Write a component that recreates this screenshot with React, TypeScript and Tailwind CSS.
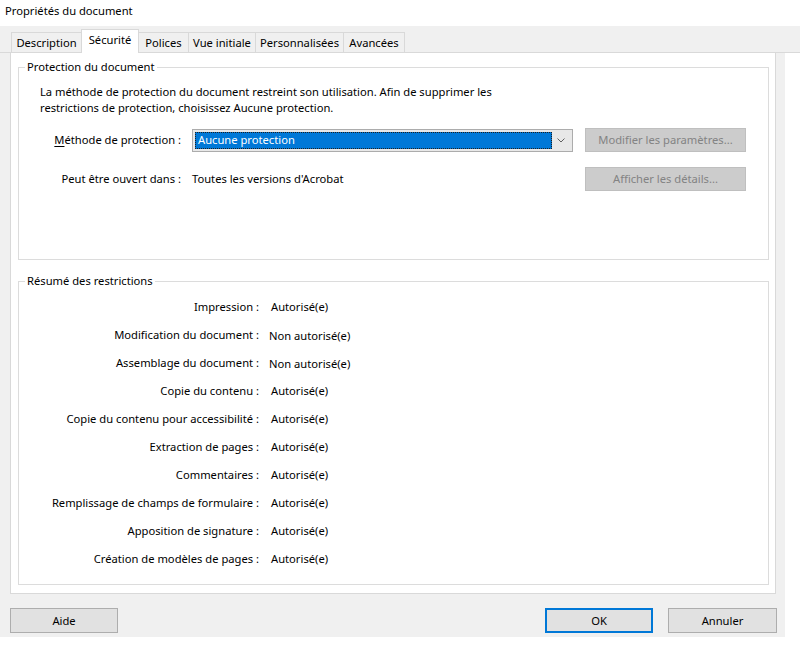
import React from "react";

const TABS = [
  { label: "Description", w: "w-[71px]" },
  { label: "Sécurité", w: "w-[58px]", active: true },
  { label: "Polices", w: "w-[51px]" },
  { label: "Vue initiale", w: "w-[68px]" },
  { label: "Personnalisées", w: "w-[89px]" },
  { label: "Avancées", w: "w-[62px]" },
];

const RESTRICTIONS: { label: string; value: string; denied?: boolean }[] = [
  { label: "Impression :", value: "Autorisé(e)" },
  { label: "Modification du document :", value: "Non autorisé(e)", denied: true },
  { label: "Assemblage du document :", value: "Non autorisé(e)", denied: true },
  { label: "Copie du contenu :", value: "Autorisé(e)" },
  { label: "Copie du contenu pour accessibilité :", value: "Autorisé(e)" },
  { label: "Extraction de pages :", value: "Autorisé(e)" },
  { label: "Commentaires :", value: "Autorisé(e)" },
  { label: "Remplissage de champs de formulaire :", value: "Autorisé(e)" },
  { label: "Apposition de signature :", value: "Autorisé(e)" },
  { label: "Création de modèles de pages :", value: "Autorisé(e)" },
];

function DisabledButton({ children }: { children: React.ReactNode }) {
  return (
    <div className="w-[161px] h-[24px] flex items-center justify-center bg-[#cccccc] border border-[#bfbfbf] text-[#838383]">
      {children}
    </div>
  );
}

export default function App() {
  return (
    <div className="w-[800px] h-[648px] bg-white text-[11.2px] leading-[16px] text-black font-['Noto_Sans',sans-serif] overflow-hidden">
      {/* Title */}
      <div className="h-[26px] pl-[5px] pt-[3px]">Propriétés du document</div>

      {/* Tab strip */}
      <div className="h-[27px] bg-[#f0f0f0] border-b border-[#d9d9d9] flex items-end pl-[11px]">
        {TABS.map((t) =>
          t.active ? (
            <div key={t.label} className={`${t.w} h-[24px] -mb-px -ml-px relative z-10 bg-white border border-b-0 border-[#d9d9d9] flex items-start justify-center pt-[2px]`}>
              {t.label}
            </div>
          ) : (
            <div key={t.label} className={`${t.w} h-[20px] -ml-px first:ml-0 bg-[#f0f0f0] border border-b-0 border-[#d9d9d9] flex items-center justify-center`}>
              {t.label}
            </div>
          )
        )}
      </div>

      {/* Dialog body */}
      <div className="w-[785px] h-[584px] bg-[#f0f0f0] pl-[10px] pr-[8px] flex flex-col">
        <div className="w-[766px] h-[541px] bg-white border-l border-r border-b border-[#d9d9d9] pt-[6px] pl-[7px] pr-[6px]">
          {/* Protection du document */}
          <fieldset className="h-[201px] border border-[#dcdcdc]">
            <legend className="ml-[6px] px-[2px] leading-[16px]">Protection du document</legend>
            <p className="mt-[9px] ml-[21px] w-[470px]">
              La méthode de protection du document restreint son utilisation. Afin de supprimer les restrictions de protection, choisissez Aucune protection.
            </p>
            <div className="mt-[12px] flex items-center h-[24px]">
              <div className="w-[162px] text-right">
                <span className="underline underline-offset-2">M</span>éthode de protection :
              </div>
              <div className="ml-[11px] w-[381px] h-[23px] border border-[#acacac] bg-[#e8e8e8] flex items-center p-[2px]">
                <div className="flex-1 h-full bg-[#0078d7] border border-dotted border-[#202020] text-white pl-[2px] flex items-center">
                  Aucune protection
                </div>
                <div className="w-[18px] flex items-center justify-center">
                  <svg width="8" height="5" viewBox="0 0 8 5">
                    <path d="M0.5 0.5 L4 4 L7.5 0.5" fill="none" stroke="#606060" strokeWidth="1" />
                  </svg>
                </div>
              </div>
              <div className="ml-[12px]">
                <DisabledButton>Modifier les paramètres...</DisabledButton>
              </div>
            </div>
            <div className="mt-[15px] flex items-center h-[24px]">
              <div className="w-[162px] text-right">Peut être ouvert dans :</div>
              <div className="ml-[11px] w-[381px]">Toutes les versions d'Acrobat</div>
              <div className="ml-[12px]">
                <DisabledButton>Afficher les détails...</DisabledButton>
              </div>
            </div>
          </fieldset>

          {/* Résumé des restrictions */}
          <fieldset className="mt-[13px] h-[312px] border border-[#dcdcdc]">
            <legend className="ml-[6px] px-[2px] leading-[16px]">Résumé des restrictions</legend>
            <div className="pt-[4px]">
              {RESTRICTIONS.map((r) => (
                <div key={r.label} className="h-[28px] flex items-center">
                  <div className="w-[240px] text-right">{r.label}</div>
                  <div className={r.denied ? "ml-[10px] pt-[2px]" : "ml-[12px]"}>{r.value}</div>
                </div>
              ))}
            </div>
          </fieldset>
        </div>

        {/* Footer buttons */}
        <div className="flex items-start pt-[14px]">
          <button className="w-[108px] h-[25px] bg-[#e1e1e1] border border-[#adadad]">Aide</button>
          <div className="flex-1" />
          <button className="w-[108px] h-[25px] bg-[#e1e1e1] border-2 border-[#0078d7]">OK</button>
          <button className="ml-[15px] w-[109px] h-[25px] bg-[#e1e1e1] border border-[#adadad]">Annuler</button>
        </div>
      </div>
    </div>
  );
}
